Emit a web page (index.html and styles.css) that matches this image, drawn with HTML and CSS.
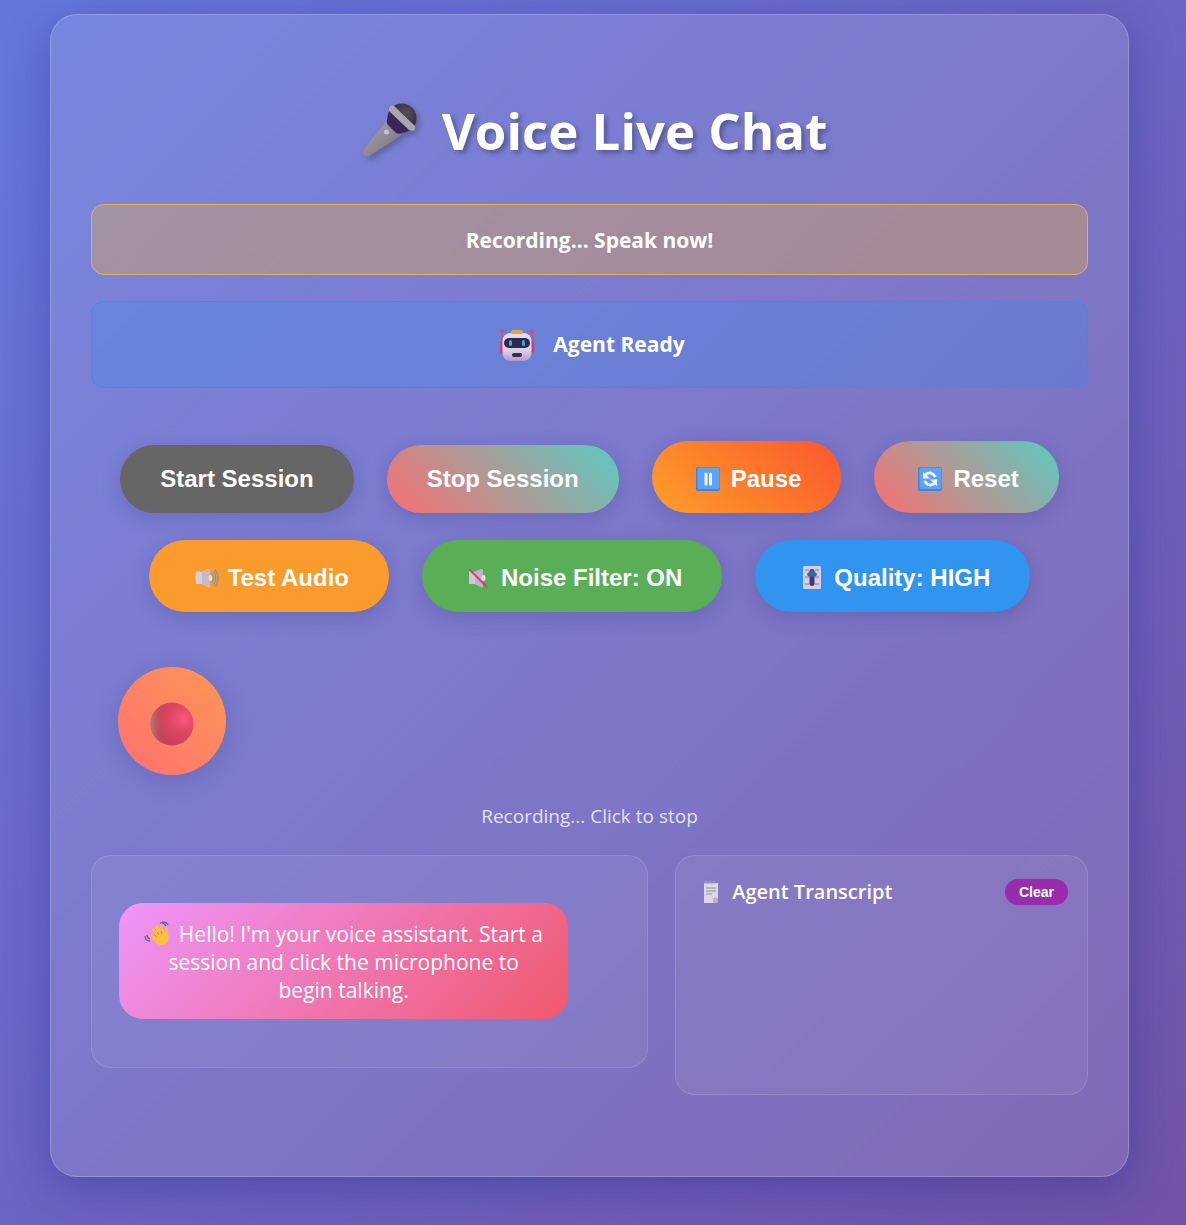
FILE: index.html
```
<!DOCTYPE html>
<html lang="en">
<head>
<meta charset="utf-8">
<meta name="viewport" content="width=device-width, initial-scale=1">
<title>Voice Live Chat</title>
<link rel="stylesheet" href="styles.css">
</head>
<body>
<main class="card">
  <h1 class="title">
    <svg class="title-icon" viewBox="0 0 56 56" aria-hidden="true">
      <defs>
        <linearGradient id="mic-body" x1="0" y1="0" x2="1" y2="1"><stop offset="0" stop-color="#aaa2aa"/><stop offset=".5" stop-color="#928b96"/><stop offset="1" stop-color="#776d80"/></linearGradient>
        <radialGradient id="mic-head" cx=".65" cy=".3" r=".8"><stop offset="0" stop-color="#574e5c"/><stop offset=".6" stop-color="#352d43"/><stop offset="1" stop-color="#43206b"/></radialGradient>
      </defs>
      <path d="M25 18 40 33 9 53Q4 56 2 53 0 51 3 46Z" fill="url(#mic-body)"/>
      <circle cx="40" cy="16" r="14.500" fill="url(#mic-head)"/>
      <path d="M27 14 43 29Q38 33 34 31L26 23Q23 19 27 14Z" fill="#40215f"/>
      <path d="M27 6Q29 2 32 4L53 24Q54 28 51 29L47 28 27 9Z" fill="#aaa5ae"/>
      <circle cx="24.500" cy="30" r="2.500" fill="#c9c3cf"/>
    </svg>
    <span>Voice Live Chat</span>
  </h1>

  <div class="status status-recording" role="status">Recording... Speak now!</div>

  <div class="status status-agent" role="status">
    <svg class="robot" viewBox="0 0 36 36" aria-hidden="true">
      <defs><linearGradient id="robot-face" x1="0" y1="0" x2="0" y2="1"><stop offset="0" stop-color="#e7dcea"/><stop offset=".65" stop-color="#d9cee3"/><stop offset="1" stop-color="#b397cf"/></linearGradient></defs>
      <path d="M3 4V15M33 4V15" stroke="#c94d84" stroke-width="1.500"/>
      <circle cx="3" cy="4" r="2" fill="#d74773"/><circle cx="33" cy="4" r="2" fill="#d74773"/>
      <rect x="1" y="14" width="6" height="13" rx="2" fill="#c94276"/><rect x="29" y="14" width="6" height="13" rx="2" fill="#c94276"/>
      <rect x="3.500" y="6" width="29" height="28" rx="8" fill="url(#robot-face)"/>
      <rect x="12" y="3" width="12" height="4" rx="2" fill="#e2a44b"/>
      <rect x="5" y="11" width="26" height="10" rx="5" fill="#2d2a49"/>
      <rect x="10" y="13" width="3" height="6" rx="1.500" fill="#39a5e4"/><rect x="23" y="13" width="3" height="6" rx="1.500" fill="#39a5e4"/>
      <rect x="13" y="26" width="10" height="4" rx="2" fill="#342e4f"/>
    </svg>
    <span>Agent Ready</span>
  </div>

  <div class="controls">
    <button type="button" class="btn btn-start">Start Session</button>
    <button type="button" class="btn btn-gradient">Stop Session</button>
    <button type="button" class="btn btn-pause btn-icon">
      <svg class="icon" viewBox="0 0 32 32" aria-hidden="true"><rect x="4" y="4" width="24" height="24" rx="2" fill="#3f82db"/><rect x="5.500" y="4.500" width="22" height="21.500" rx="1.500" fill="#5ba4f3"/><path d="M14 11V21M18.500 11V21" stroke="#f2f4fc" stroke-width="3" stroke-linecap="round"/></svg>
      Pause
    </button>
    <button type="button" class="btn btn-gradient btn-icon">
      <svg class="icon" viewBox="0 0 32 32" aria-hidden="true"><rect x="4" y="4" width="24" height="24" rx="2" fill="#3f82db"/><rect x="5.500" y="4.500" width="22" height="21.500" rx="1.500" fill="#5ba4f3"/><path d="M11 12Q17 7 21.500 14M21 20Q15 25 10.500 18" fill="none" stroke="#f2f4fc" stroke-width="2.800"/><path d="M9 9V15.500H16ZM23 23V16.500H16Z" fill="#f2f4fc"/></svg>
      Reset
    </button>
    <button type="button" class="btn btn-audio btn-icon">
      <svg class="icon" viewBox="0 0 32 32" aria-hidden="true"><path d="M7 9 13 10 19 7Q21 7 21 10V24Q21 26 19 25L13 22H7Q6 16 7 9Z" fill="#d5cedb"/><path d="M13 10 19 7Q21 7 21 10V24Q21 26 19 25L13 22Z" fill="#c2bacb"/><ellipse cx="21.500" cy="16" rx="2" ry="3" fill="#e5dee9"/><path d="M23 12Q26 16 23 20M24.500 9.500Q29 16 24.500 22.500M26 7.500Q32 16 26 24.500" fill="none" stroke="#8799a5" stroke-width="1.500"/></svg>
      Test Audio
    </button>
    <button type="button" class="btn btn-noise btn-icon">
      <svg class="icon" viewBox="0 0 32 32" aria-hidden="true"><path d="M7 9 13 10 19 7Q21 7 21 10V24Q21 26 19 25L13 22H7Z" fill="#d0c8d6"/><path d="M13 10 19 7Q21 7 21 10V24Q21 26 19 25L13 22Z" fill="#bdb4c5"/><ellipse cx="21.500" cy="16" rx="2" ry="3" fill="#e5dee9"/><path d="M7 7 25 25" stroke="#da3f68" stroke-width="1.800"/></svg>
      Noise Filter: ON
    </button>
    <button type="button" class="btn btn-quality btn-icon">
      <svg class="icon" viewBox="0 0 32 32" aria-hidden="true"><rect x="8" y="4" width="18" height="23" rx="1.500" fill="#d5cfe6"/><path d="M10 8H14M20 8H24M10 15H14M20 15H24M10 22H14M20 22H24" stroke="#9d7183" stroke-width="1.200"/><rect x="14.500" y="7" width="5" height="17" rx="2.500" fill="#4b376f"/><path d="M14 10Q17 7 20 10L22 12Q22 15 17 15T12 12Z" fill="#3168a7"/></svg>
      Quality: HIGH
    </button>
  </div>

  <button type="button" class="mic-button" aria-label="Stop recording">
    <svg class="record-dot" viewBox="0 0 44 44" aria-hidden="true">
      <defs>
        <radialGradient id="dot" cx=".78" cy=".36" r=".72"><stop offset="0" stop-color="#f8577d"/><stop offset=".5" stop-color="#dc4660"/><stop offset="1" stop-color="#c04359"/></radialGradient>
        <linearGradient id="dot-edge"><stop offset="0" stop-color="#b77b72"/><stop offset=".25" stop-color="#b96266" stop-opacity="0"/></linearGradient>
      </defs>
      <circle cx="22" cy="22" r="21.500" fill="url(#dot)"/><circle cx="22" cy="22" r="21.500" fill="url(#dot-edge)"/>
    </svg>
  </button>
  <p class="hint">Recording... Click to stop</p>

  <div class="panels">
    <section class="panel chat" aria-label="Conversation">
      <p class="bubble">
        <svg class="wave" viewBox="0 0 26 26" aria-hidden="true"><path d="M10 13 7.500 8.500Q8 6.500 10 7.500L13 11 11 5.500Q12 3.500 14 5.500L17 10 15.500 4.500Q17 2.500 18.500 5L20.500 11 21 7Q23 5 24 8L24.500 16Q25 22 20 24 14 25 10 20L6 15Q5.500 12.500 8 13L11 16Z" fill="#fabd42"/><path d="M10 13 13 16M13 11 15 14M17 10 18 13" stroke="#dc8e3d"/><path d="M1 15Q1 20 6 20M3 14Q3 17 6 18M16 2Q20 1 22 5M18 1Q23 1 24 4" fill="none" stroke="#6462bd" stroke-width="1.300"/></svg>
        Hello! I'm your voice assistant. Start a session and click the microphone to begin talking.
      </p>
    </section>
    <section class="panel transcript">
      <header class="panel-header">
        <h2 class="panel-title">
          <svg class="note" viewBox="0 0 28 28" aria-hidden="true"><path d="M7 5H21V25H7Z" fill="#ddd6e8"/><path d="M8 6V3.500H10V6M12 6V3.500H14V6M16 6V3.500H18V6" fill="none" stroke="#a79dae"/><path d="M9 10H19M9 13H19M9 16H15" stroke="#978b9e" stroke-width="1.200"/><path d="M16 20H21V25H16Z" fill="#b9aec4"/></svg>
          <span>Agent Transcript</span>
        </h2>
        <button type="button" class="clear">Clear</button>
      </header>
    </section>
  </div>
</main>
</body>
</html>
```

FILE: styles.css
```
* {
  box-sizing: border-box;
}

body {
  min-height: 100vh;
  margin: 0;
  padding: 14px 57px 48px 50px;
  background: linear-gradient(135deg, #6677dc 0%, #7153a9 100%);
  color: #fff;
  font-family: "Segoe UI", "Open Sans", sans-serif;
}

.card {
  padding: 79px 40px 81px;
  border: 1px solid rgba(255, 255, 255, 0.2);
  border-radius: 27px;
  background: rgba(255, 255, 255, 0.12);
  box-shadow: 0 11px 43px rgba(31, 38, 135, 0.37);
}

.title {
  display: flex;
  align-items: center;
  justify-content: center;
  gap: 24px;
  margin: 0 0 38px;
  padding-left: 10px;
  font-size: 51px;
  line-height: 72px;
  text-shadow: 3px 3px 5px rgba(0, 0, 0, 0.3);
}

.title-icon {
  width: 56px;
  height: 56px;
  filter: drop-shadow(3px 3px 3px rgba(0, 0, 0, 0.25));
}

.status {
  display: flex;
  align-items: center;
  justify-content: center;
  margin-bottom: 26px;
  border: 1px solid;
  border-radius: 13px;
  font-size: 21px;
  font-weight: 700;
  line-height: 29px;
}

.status-recording {
  padding: 21px 20px 19px;
  border-color: #e2b456;
  background: rgba(255, 183, 40, 0.3);
}

.status-agent {
  gap: 18px;
  min-height: 87px;
  padding: 20px 20px 20px 25px;
  border-color: rgba(33, 150, 243, 0.6);
  background: rgba(33, 150, 243, 0.2);
}

.robot {
  width: 36px;
  height: 36px;
}

.controls {
  display: flex;
  flex-wrap: wrap;
  align-items: flex-end;
  justify-content: center;
  gap: 27px 33px;
  margin-top: 53px;
}

.btn {
  display: flex;
  align-items: center;
  gap: 7px;
  padding: 20px 40px;
  border: 0;
  border-radius: 40px;
  color: #fff;
  font: bold 24px/28px "Liberation Sans", Arial, sans-serif;
  box-shadow: 0 5px 20px rgba(31, 38, 100, 0.2);
}

.btn-icon {
  padding-block: 22px 18px;
}

.icon {
  width: 32px;
  height: 32px;
}

.btn-start {
  background: #666;
}

.btn-gradient {
  background: linear-gradient(45deg, #fa6e70, #5acbc2);
}

.btn-pause {
  background: linear-gradient(45deg, #fd9e29, #fb572d);
}

.btn-audio {
  background: #fb9b2d;
}

.btn-noise {
  background: #5aae58;
}

.btn-quality {
  background: #3194ef;
}

.mic-button {
  display: flex;
  align-items: center;
  justify-content: center;
  width: 108px;
  height: 108px;
  margin: 55px 27px 27px;
  padding: 5px 0 0;
  border: 0;
  border-radius: 50%;
  background: linear-gradient(45deg, #ff7070, #fc9755);
  box-shadow: 0 5px 27px rgba(31, 38, 100, 0.2);
}

.record-dot {
  width: 44px;
  height: 44px;
}

.hint {
  margin: 0 0 25px;
  color: rgba(255, 255, 255, 0.8);
  font-size: 19px;
  line-height: 28px;
  text-align: center;
}

.panels {
  display: grid;
  grid-template-columns: 27fr 20fr;
  align-items: start;
  gap: 27px;
}

.panel {
  border: 1px solid rgba(255, 255, 255, 0.12);
  border-radius: 20px;
  background: rgba(255, 255, 255, 0.06);
}

.chat {
  padding: 47px 29px 48px 27px;
}

.bubble {
  width: 90%;
  margin: 0;
  padding: 17px 22px 15px;
  border-radius: 24px;
  background: linear-gradient(135deg, #ee96fa, #f0586b);
  font-size: 21px;
  line-height: 28px;
  text-align: center;
}

.wave {
  width: 26px;
  height: 26px;
  margin-right: 3px;
  vertical-align: -5px;
}

.transcript {
  min-height: 240px;
  padding: 21px 19px;
}

.panel-header {
  display: flex;
  align-items: center;
  justify-content: space-between;
}

.panel-title {
  display: flex;
  align-items: center;
  gap: 7px;
  margin: 0;
  padding-left: 2px;
  font-size: 20px;
  font-weight: 600;
  line-height: 30px;
}

.note {
  width: 28px;
  height: 28px;
}

.clear {
  padding: 5px 14px;
  border: 0;
  border-radius: 20px;
  background: #972dab;
  color: #fff;
  font: bold 14px/16px "Liberation Sans", Arial, sans-serif;
}
```
